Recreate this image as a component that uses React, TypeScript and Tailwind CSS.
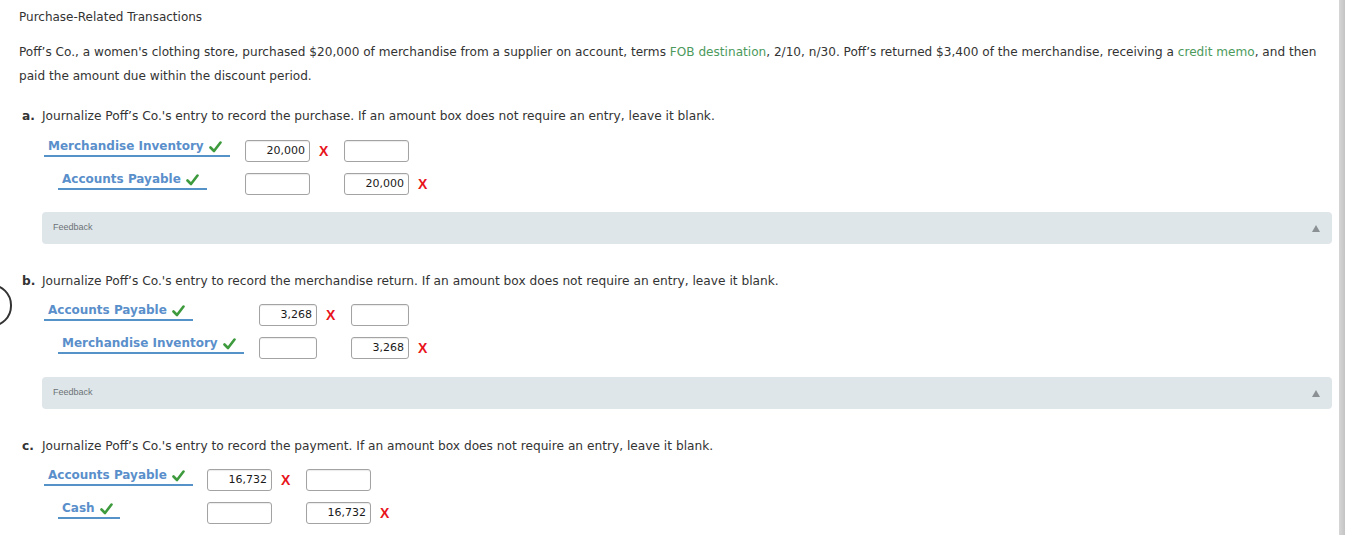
import React from "react";

const font = { fontFamily: '"DejaVu Sans", Verdana, sans-serif' };

function Check() {
  return (
    <svg width="13" height="12" viewBox="0 0 13 12" className="inline-block ml-[5px] -mb-[1px]">
      <path d="M1.5 6.5 L5 10 L11.5 1.5" stroke="#3d9a3d" strokeWidth="2.6" fill="none" strokeLinecap="round" strokeLinejoin="round" />
    </svg>
  );
}

function XMark() {
  return (
    <span
      className="font-bold text-[14px] leading-[14px] text-[#e8141b]"
      style={{ fontFamily: '"Liberation Sans", Arial, sans-serif' }}
    >
      X
    </span>
  );
}

function Box({ value, w }: { value?: string; w: string }) {
  return (
    <div className={`${w} h-[22px] shrink-0 border border-[#a3a3a3] rounded-[3px] bg-white text-right pr-[4px] text-[11px] leading-[20px] text-[#1a1a1a] shadow-[inset_0_1px_1px_rgba(0,0,0,0.08)]`}>
      {value}
    </div>
  );
}

type Row = { name: string; indent: boolean; underline: string; debit?: string; credit?: string };

function Entry({
  rows,
  acctW,
  boxW,
  gap1,
  gap2,
}: {
  rows: Row[];
  acctW: string;
  boxW: string;
  gap1: string;
  gap2: string;
}) {
  return (
    <div className="flex flex-col gap-[11px]">
      {rows.map((r, i) => (
        <div key={i} className="flex items-start h-[22px]">
          <div className={`${acctW} shrink-0 -mt-[1px]`}>
            <div className={r.indent ? "pl-[14px]" : ""}>
              <div className={`${r.underline} border-b-2 border-[#5592c8] pl-[4px] pb-[2px] text-[12px] font-bold text-[#5a8fcb] leading-[14px] whitespace-nowrap`}>
                {r.name}
                <Check />
              </div>
            </div>
          </div>
          <Box value={r.debit} w={boxW} />
          <div className={`${gap1} h-[22px] shrink-0 pl-[9px] flex items-center`}>{r.debit ? <XMark /> : null}</div>
          <Box value={r.credit} w={boxW} />
          <div className={`${gap2} h-[22px] pl-[9px] flex items-center`}>{r.credit ? <XMark /> : null}</div>
        </div>
      ))}
    </div>
  );
}

function Feedback() {
  return (
    <div className="ml-[42px] mr-[6px] h-[32px] rounded-[4px] bg-[#dfe6e9] flex items-center justify-between pl-[11px] pr-[12px]">
      <span className="text-[9px] text-[#6b7377]" style={{ fontFamily: '"Liberation Sans", Arial, sans-serif' }}>Feedback</span>
      <svg width="8" height="7" viewBox="0 0 8 7"><path d="M4 0 L8 7 L0 7 Z" fill="#8a9094" /></svg>
    </div>
  );
}

function Question({ letter, text }: { letter: string; text: string }) {
  return (
    <div className="pl-[22px] text-[12.2px] text-[#333] leading-[16px] flex">
      <span className="font-bold w-[20px]">{letter}</span>
      <span>{text}</span>
    </div>
  );
}

export default function App() {
  return (
    <div className="w-[1345px] h-[535px] bg-white relative overflow-hidden text-[#333]" style={font}>
      <div className="absolute -left-[30px] top-[284px] w-[42px] h-[43px] rounded-full border-[2.5px] border-[#333]" />
      <div className="absolute right-0 top-0 w-[6px] h-full bg-gradient-to-r from-[#d6d6d6] to-[#c4c4c4]" />
      <div className="pr-[7px]">
        <div className="pl-[19px] pt-[9px] text-[12px] leading-[16px]">Purchase-Related Transactions</div>
        <div className="pl-[19px] pr-[14px] mt-[15px] text-[12.1px] leading-[24px]">
          Poff’s Co., a women's clothing store, purchased $20,000 of merchandise from a supplier on account, terms{" "}
          <span className="text-[#4c9a5c]">FOB destination</span>, 2/10, n/30. Poff’s returned $3,400 of the merchandise, receiving a{" "}
          <span className="text-[#4c9a5c]">credit memo</span>, and then paid the amount due within the discount period.
        </div>

        <div className="mt-[20px]">
          <Question letter="a." text="Journalize Poff’s Co.'s entry to record the purchase. If an amount box does not require an entry, leave it blank." />
        </div>
        <div className="mt-[16px] pl-[44px]">
          <Entry
            acctW="w-[201px]"
            boxW="w-[65px]"
            gap1="w-[34px]"
            gap2="w-[30px]"
            rows={[
              { name: "Merchandise Inventory", indent: false, underline: "w-[186px]", debit: "20,000" },
              { name: "Accounts Payable", indent: true, underline: "w-[149px]", credit: "20,000" },
            ]}
          />
        </div>
        <div className="mt-[17px]">
          <Feedback />
        </div>

        <div className="mt-[29px]">
          <Question letter="b." text="Journalize Poff’s Co.'s entry to record the merchandise return. If an amount box does not require an entry, leave it blank." />
        </div>
        <div className="mt-[15px] pl-[44px]">
          <Entry
            acctW="w-[215px]"
            boxW="w-[58px]"
            gap1="w-[34px]"
            gap2="w-[30px]"
            rows={[
              { name: "Accounts Payable", indent: false, underline: "w-[149px]", debit: "3,268" },
              { name: "Merchandise Inventory", indent: true, underline: "w-[186px]", credit: "3,268" },
            ]}
          />
        </div>
        <div className="mt-[18px]">
          <Feedback />
        </div>

        <div className="mt-[29px]">
          <Question letter="c." text="Journalize Poff’s Co.'s entry to record the payment. If an amount box does not require an entry, leave it blank." />
        </div>
        <div className="mt-[15px] pl-[44px]">
          <Entry
            acctW="w-[163px]"
            boxW="w-[65px]"
            gap1="w-[34px]"
            gap2="w-[30px]"
            rows={[
              { name: "Accounts Payable", indent: false, underline: "w-[149px]", debit: "16,732" },
              { name: "Cash", indent: true, underline: "w-[62px]", credit: "16,732" },
            ]}
          />
        </div>
      </div>
    </div>
  );
}
